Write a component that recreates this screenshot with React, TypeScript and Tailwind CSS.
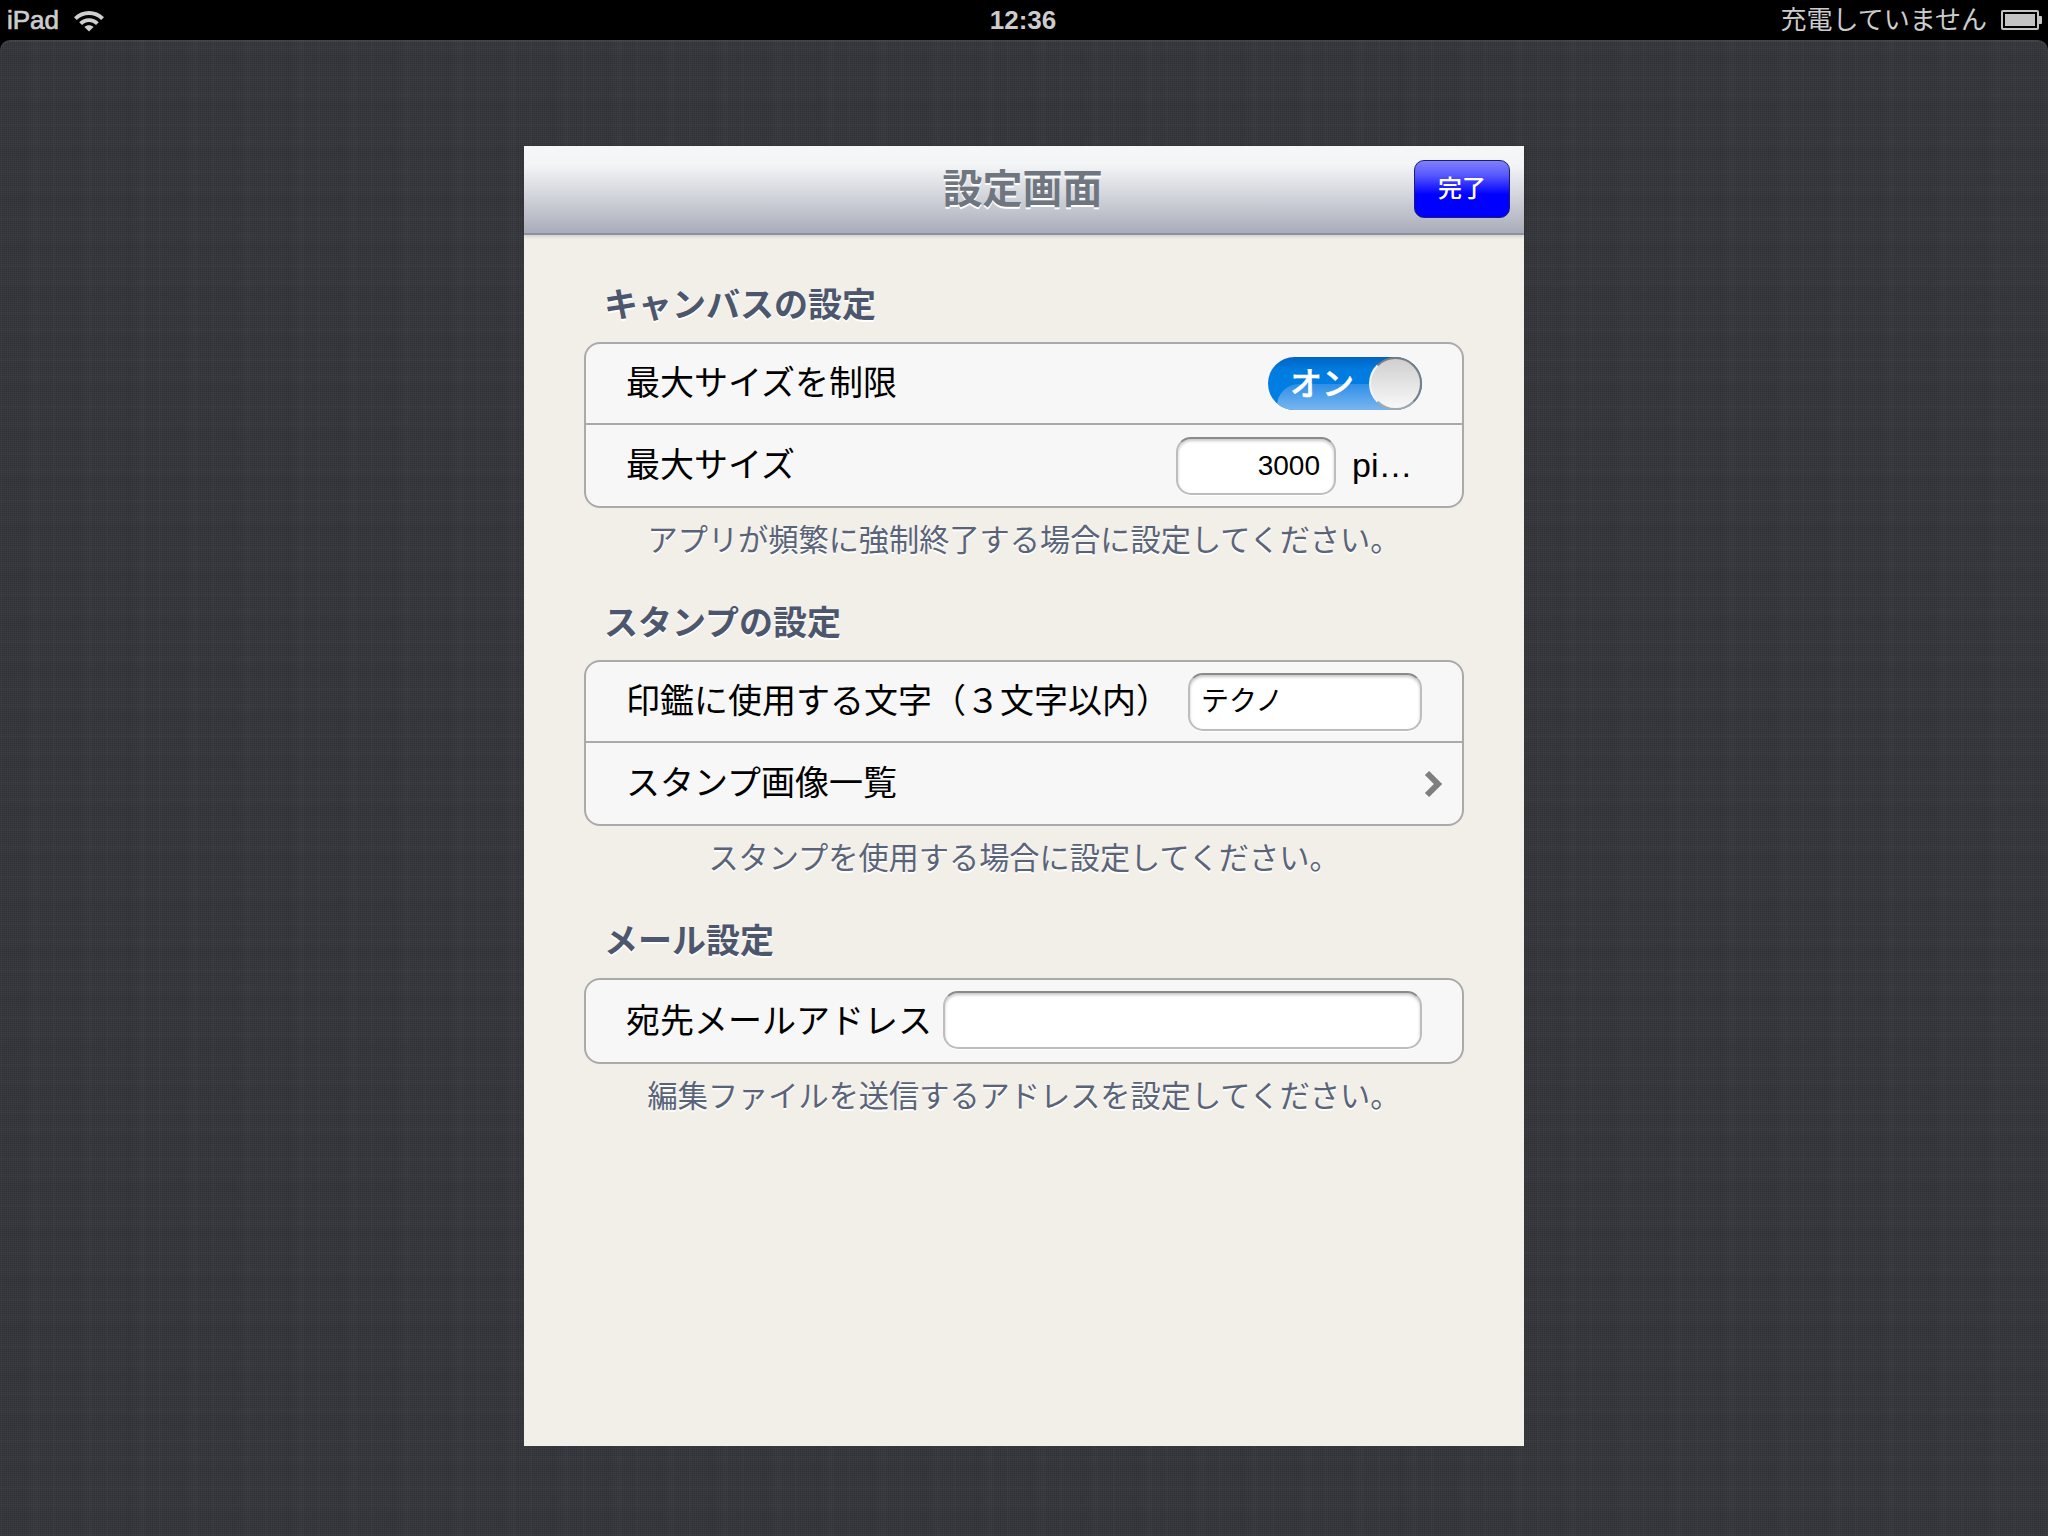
const jp = "font-['Liberation_Sans','Noto_Sans_CJK_JP',sans-serif]";

function Wifi() {
  return (
    <svg width="32" height="24" viewBox="0 0 32 24" fill="#cfcfcf">
      <path d="M1 9.2 C9 1 23 1 31 9.2 L28.2 12 C21.6 5.4 10.4 5.4 3.8 12 Z" />
      <path d="M6.2 14.2 C11.6 8.8 20.4 8.8 25.8 14.2 L23 17 C19 13 13 13 9 17 Z" />
      <path d="M11.4 19 C14 16.6 18 16.6 20.6 19 L16 23.6 Z" />
    </svg>
  );
}

function Battery() {
  return (
    <div className="flex items-center">
      <div className="w-[38px] h-[20px] border-2 border-[#c4c4c4] rounded-[2px] p-[2px]">
        <div className="w-full h-full bg-[#c4c4c4]" />
      </div>
      <div className="w-[3px] h-[8px] bg-[#c4c4c4] rounded-r-[1px]" />
    </div>
  );
}

function Section({ title, note, children }: { title: string; note: string; children: React.ReactNode }) {
  return (
    <section className="mb-[30px] mx-[60px]">
      <h2 className="h-[50px] mb-[14px] pl-[20px] pt-[2px] text-[34px] leading-[50px] font-bold text-[#4c566c] [text-shadow:0_2px_0_#ffffff]">
        {title}
      </h2>
      <div className="border-2 border-[#aaaaaa] rounded-[16px] bg-[#f7f7f7] overflow-hidden">{children}</div>
      <p className="h-[50px] mt-[8px] text-center text-[30.2px] leading-[50px] text-[#5a6479] [text-shadow:0_2px_0_#ffffff]">
        {note}
      </p>
    </section>
  );
}

function Row({ label, last, single, children }: { label: string; last?: boolean; single?: boolean; children?: React.ReactNode }) {
  return (
    <div
      className={
        "flex items-center justify-between pl-[40px] pr-[40px] text-[34px] text-black " +
        (single ? "h-[82px]" : last ? "h-[81px]" : "h-[81px] border-b-2 border-[#aaaaaa]")
      }
    >
      <span className="whitespace-nowrap">{label}</span>
      {children}
    </div>
  );
}

function Field({ className, children }: { className: string; children?: React.ReactNode }) {
  return (
    <div
      className={
        "h-[58px] rounded-[15px] bg-white border-2 border-[#bdbdbd] border-t-[#8a8a8a] shadow-[inset_0_2px_3px_rgba(0,0,0,0.22),0_1px_0_#ffffff] flex items-center text-[28px] text-black " +
        className
      }
    >
      {children}
    </div>
  );
}

export default function App() {
  return (
    <div className={"w-[2048px] h-[1536px] bg-black flex flex-col overflow-hidden " + jp}>
      <header className="relative h-[40px] flex items-center justify-between pl-[7px] pr-[6px] text-[#cccccc] text-[26px] leading-none">
        <div className="flex items-center gap-[14px]">
          <span className="font-medium [-webkit-text-stroke:0.7px_#cccccc]">iPad</span>
          <Wifi />
        </div>
        <span className="absolute left-0 right-0 text-center font-bold pr-[2px]">12:36</span>
        <div className="flex items-center gap-[14px]">
          <span>充電していません</span>
          <Battery />
        </div>
      </header>
      <main className="flex-1 rounded-t-[10px] bg-[#3a3c41] bg-[repeating-linear-gradient(90deg,rgba(0,0,0,0.10)_0px,rgba(0,0,0,0.10)_1px,transparent_1px,transparent_2px),repeating-linear-gradient(0deg,rgba(0,0,0,0.08)_0px,rgba(0,0,0,0.08)_1px,transparent_1px,transparent_2px),repeating-linear-gradient(90deg,rgba(255,255,255,0.018)_0px,transparent_3px,transparent_17px,rgba(0,0,0,0.025)_23px,transparent_29px,rgba(255,255,255,0.015)_37px,transparent_41px,transparent_53px),repeating-linear-gradient(0deg,rgba(255,255,255,0.015)_0px,transparent_4px,transparent_13px,rgba(0,0,0,0.025)_19px,transparent_27px,rgba(255,255,255,0.012)_31px,transparent_35px,transparent_47px)] shadow-[inset_0_2px_0_rgba(255,255,255,0.06)] pt-[106px]">
        <div className="w-[1000px] h-[1300px] mx-auto bg-[#f2efe9] flex flex-col">
          <div className="relative h-[89px] flex items-center justify-center border-b-2 border-[#8d90a2] bg-[linear-gradient(180deg,#f6f7f9_0%,#f3f4f6_22%,#d2d4db_58%,#a9acb9_100%)] shadow-[0_2px_3px_rgba(0,0,0,0.12)]">
            <h1 className="text-[40px] font-bold text-[#6f7680] pr-[3px] pb-[2px] [text-shadow:0_2px_0_#ffffff]">設定画面</h1>
            <button className="absolute right-[14px] top-[14px] w-[96px] h-[58px] rounded-[10px] border border-[#1c1c70] bg-[linear-gradient(180deg,#8080ff_0%,#5858ff_25%,#0000ff_60%,#0000ff_100%)] text-white text-[24px] font-medium">
              完了
            </button>
          </div>
          <div className="pt-[43px]">
            <Section title="キャンバスの設定" note="アプリが頻繁に強制終了する場合に設定してください。">
              <Row label="最大サイズを制限">
                <div className="relative w-[154px] h-[53px] rounded-full overflow-hidden bg-[linear-gradient(180deg,#0064c4_0%,#007ce0_25%,#0080e6_100%)] flex items-center pl-[22px] text-white text-[32px] font-medium">
                  <div className="absolute left-[9px] right-0 top-[27px] bottom-0 rounded-tl-[22px] bg-[linear-gradient(180deg,#2f8fe8_0%,#78b6ef_100%)]" />
                  <span className="relative leading-none [-webkit-text-stroke:0.5px_#ffffff]">オン</span>
                  <div className="absolute right-0 top-0 w-[53px] h-[53px] rounded-full border-2 border-[#7d7d7d] border-l-[#f4f4f4] border-b-[#a8a8a8] bg-[linear-gradient(180deg,#cfcfcf_0%,#f8f8f8_100%)]" />
                </div>
              </Row>
              <Row label="最大サイズ" last>
                <div className="flex items-center">
                  <Field className="w-[160px] justify-end pr-[14px]">3000</Field>
                  <span className="w-[86px] pl-[16px] whitespace-nowrap">pi…</span>
                </div>
              </Row>
            </Section>
            <Section title="スタンプの設定" note="スタンプを使用する場合に設定してください。">
              <Row label="印鑑に使用する文字（３文字以内）">
                <Field className="w-[234px] pl-[11px]">テクノ</Field>
              </Row>
              <Row label="スタンプ画像一覧" last>
                <svg width="20" height="28" viewBox="0 0 20 28" className="-mr-[21px]">
                  <path d="M4 3 L15 14 L4 25" fill="none" stroke="#7f7f7f" strokeWidth="6" />
                </svg>
              </Row>
            </Section>
            <Section title="メール設定" note="編集ファイルを送信するアドレスを設定してください。">
              <Row label="宛先メールアドレス" single>
                <Field className="w-[479px] -mt-[2px]" />
              </Row>
            </Section>
          </div>
        </div>
      </main>
    </div>
  );
}
